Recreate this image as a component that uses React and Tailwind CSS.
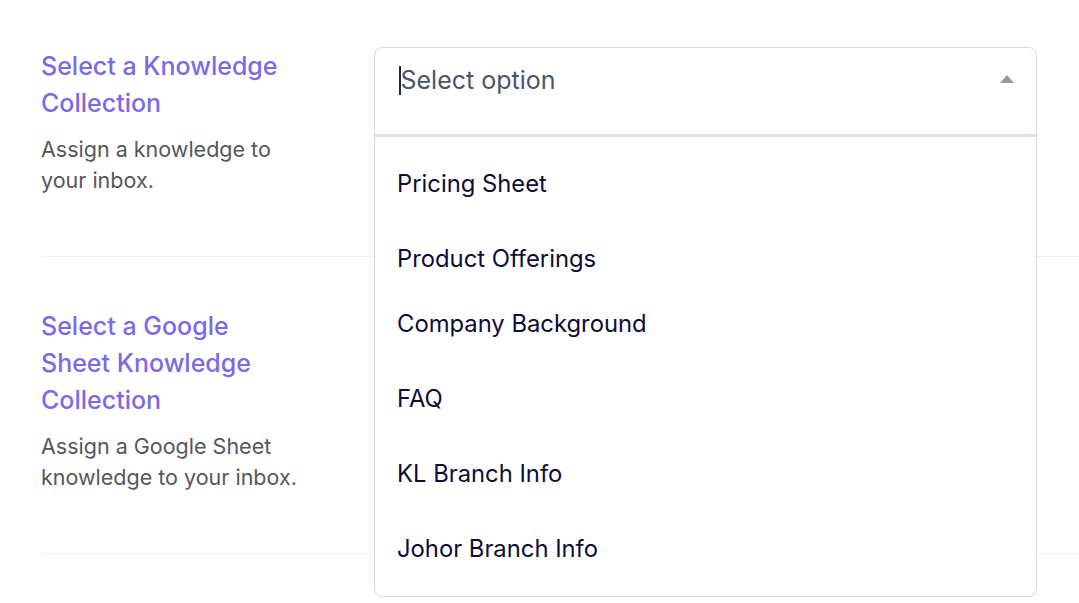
import React from "react";

const options = [
  { label: "Pricing Sheet", cls: "h-[75px]" },
  { label: "Product Offerings", cls: "h-[65px] pt-[10px]" },
  { label: "Company Background", cls: "h-[75px]" },
  { label: "FAQ", cls: "h-[75px]" },
  { label: "KL Branch Info", cls: "h-[75px]" },
  { label: "Johor Branch Info", cls: "h-[75px]" },
];

const Setting = ({ title, desc, children, pt }) => (
  <div className={`flex border-b border-[#f0f1f3] ${pt} pb-[60px]`}>
    <div className="w-[333px] shrink-0">
      <div className="w-[262px]">
        <h3 className="text-[25px] leading-[37px] text-[#7b6ae8] font-medium">{title}</h3>
        <p className="mt-[12px] text-[21.5px] leading-[31px] text-[#55575e]">{desc}</p>
      </div>
    </div>
    <div className="flex-1 relative">{children}</div>
  </div>
);

const Dropdown = () => (
  <div className="absolute left-0 -top-[1px] w-[663px] z-10 bg-white border border-[#d6d9de] rounded-[8px] overflow-hidden">
    {/* input */}
    <div className="h-[86px] flex items-start pt-[17px] pl-[24px] pr-[22px]">
      <span className="w-[1.5px] h-[29px] bg-[#1f2937] mt-[1px]" />
      <span className="text-[25px] leading-[30px] text-[#4a5568]">Select option</span>
      <span className="ml-auto mt-[10px] w-0 h-0 border-l-[7.5px] border-r-[7.5px] border-b-[8px] border-l-transparent border-r-transparent border-b-[#999999]" />
    </div>
    <div className="h-[3px] bg-[#dfe1e6]" />
    {/* menu */}
    <ul className="py-[9.5px]">
      {options.map((o) => (
        <li key={o.label} className={`${o.cls} flex items-center pl-[22px] text-[23.8px] text-[#0d0d38]`}>
          {o.label}
        </li>
      ))}
    </ul>
  </div>
);

export default function App() {
  return (
    <div className="min-h-screen bg-white overflow-hidden pl-[41px]" style={{ fontFamily: "Inter, 'Noto Sans', sans-serif" }}>
      <Setting
        pt="pt-[48px]"
        title="Select a Knowledge Collection"
        desc="Assign a knowledge to your inbox."
      >
        <Dropdown />
      </Setting>
      <Setting
        pt="pt-[51px]"
        title="Select a Google Sheet Knowledge Collection"
        desc="Assign a Google Sheet knowledge to your inbox."
      />
    </div>
  );
}
